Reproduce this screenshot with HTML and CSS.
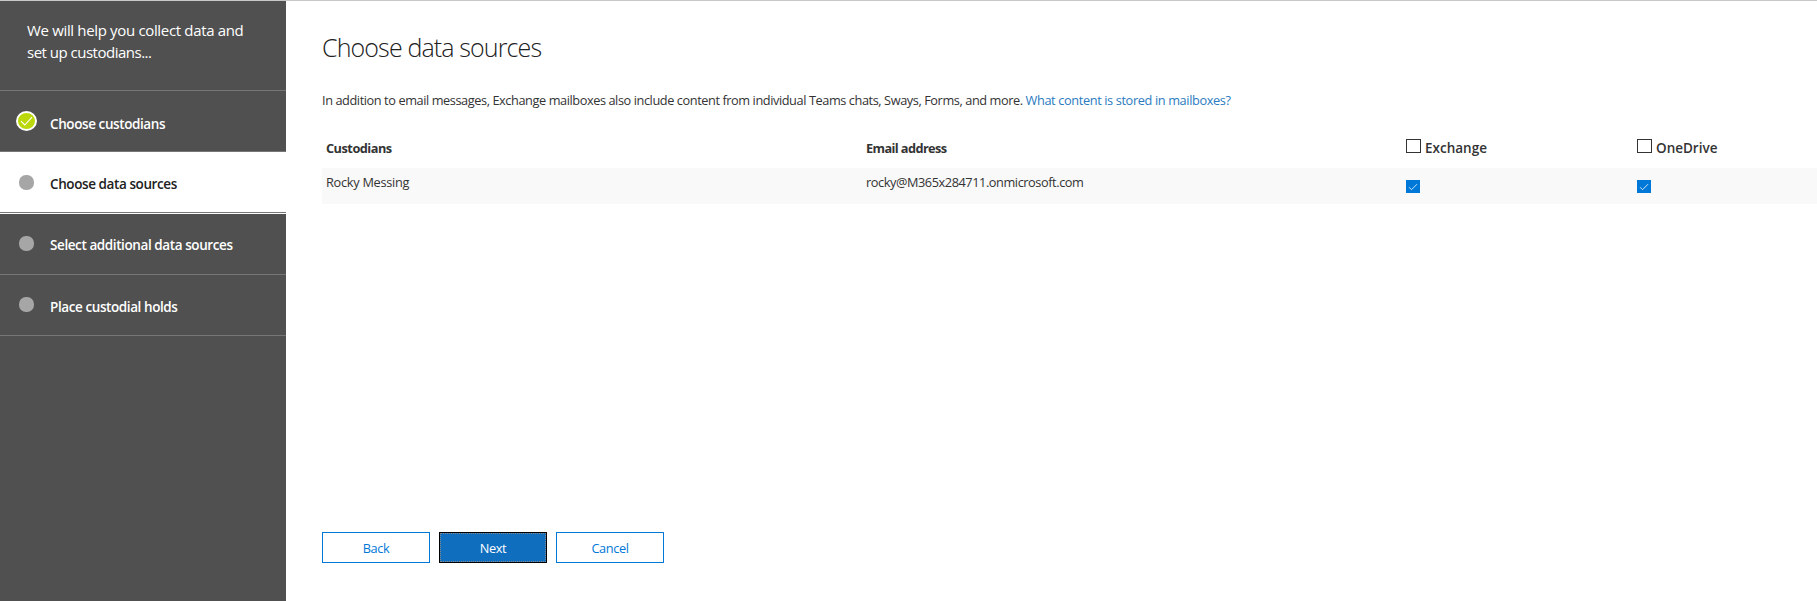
FILE: index.html
```html
<!DOCTYPE html>
<html lang="en">
<head>
<meta charset="utf-8">
<title>Choose data sources</title>
<link rel="stylesheet" href="styles.css">
</head>
<body>
<div class="page">
  <aside class="sidebar">
    <div class="intro">We will help you collect data and<br><span class="intro-end">set up custodians...</span></div>
    <ol class="steps">
      <li class="step done">
        <svg class="done-icon" width="21" height="20" viewBox="0 0 21 20"><ellipse cx="10.5" cy="10" rx="9.5" ry="9" fill="#bad80a" stroke="#fff" stroke-width="2"/><path d="M5 10.2 8.8 14 16 6.2" fill="none" stroke="#fff" stroke-width="1.1"/></svg>
        <span class="label">Choose custodians</span>
      </li>
      <li class="step current"><i class="dot"></i><span class="label">Choose data sources</span></li>
      <li class="step after-current"><i class="dot"></i><span class="label">Select additional data sources</span></li>
      <li class="step last"><i class="dot"></i><span class="label">Place custodial holds</span></li>
    </ol>
  </aside>
  <main class="content">
    <h1>Choose data sources</h1>
    <p class="description">In addition to email messages, Exchange mailboxes also include content from individual Teams chats, Sways, Forms, and more. <a href="#">What content is stored in mailboxes?</a></p>
    <div class="table">
      <div class="row head">
        <div class="cell">Custodians</div>
        <div class="cell email-head">Email address</div>
        <div class="cell check"><i class="box"></i><span>Exchange</span></div>
        <div class="cell check"><i class="box"></i><span>OneDrive</span></div>
      </div>
      <div class="row data">
        <div class="cell name">Rocky Messing</div>
        <div class="cell email">rocky@M365x284711.onmicrosoft.com</div>
        <div class="cell"><svg class="ticked" width="14" height="13" viewBox="0 0 14 13"><path fill="#0078d7" d="M0 0h14v13H0z"/><path d="M3 7.2 5.5 9.7 11 4.2" fill="none" stroke="#fff" stroke-width=".8"/></svg></div>
        <div class="cell"><svg class="ticked" width="14" height="13" viewBox="0 0 14 13"><path fill="#0078d7" d="M0 0h14v13H0z"/><path d="M3 7.2 5.5 9.7 11 4.2" fill="none" stroke="#fff" stroke-width=".8"/></svg></div>
      </div>
    </div>
    <div class="actions">
      <button class="btn">Back</button>
      <button class="btn primary">Next</button>
      <button class="btn">Cancel</button>
    </div>
  </main>
</div>
</body>
</html>
```
FILE: styles.css
```css
* { box-sizing: border-box; }
body { margin: 0; font: 12.75px/18px "Open Sans", "Noto Sans", sans-serif; color: #333; background: #fff; }
.page { display: flex; height: 601px; border-top: 1px solid #c8c8c8; overflow: hidden; }
.sidebar { width: 286px; flex: none; background: #505050; color: #fff; }
.intro { height: 90px; padding: 18px 0 0 27px; font-size: 15px; line-height: 22px; letter-spacing: -.34px; white-space: nowrap; border-bottom: 1px solid #767676; }
.intro-end { letter-spacing: -.5px; }
.steps { list-style: none; margin: 0; padding: 0; }
.step { display: flex; height: 61px; padding-left: 19px; border-bottom: 1px solid #767676; font-weight: 600; font-size: 13.5px; line-height: 20px; letter-spacing: -.41px; }
.done { padding-left: 16px; }
.done-icon { margin-top: 20px; margin-right: 13px; }
.dot { width: 15px; height: 15px; margin: 22px 16px 0 0; border-radius: 7px; background: #a6a6a6; }
.label { margin-top: 22px; white-space: nowrap; }
.done .label { margin-top: 23px; }
.current { background: #fff; color: #212121; }
.current .dot { margin-top: 23px; }
.after-current { height: 62px; border-top: 1px solid #fff; }
.after-current .label { margin-top: 21px; }
.content { flex: 1; min-width: 0; padding-left: 36px; display: flex; flex-direction: column; }
h1 { margin: 26px 0 0; font-size: 25px; line-height: 40px; font-weight: 300; letter-spacing: -.87px; color: #212121; }
.description { margin: 24px 0 0; white-space: nowrap; letter-spacing: -.42px; }
a { color: #2b7bbf; text-decoration: none; letter-spacing: -.37px; }
.table { margin-top: 28px; }
.row { display: grid; grid-template-columns: 540px 540px 231px 1fr; }
.cell { padding-left: 4px; letter-spacing: -.5px; }
.email-head { letter-spacing: -.6px; }
.head { height: 31px; padding-top: 2px; font-weight: 700; }
.check { display: flex; gap: 4px; font-weight: 600; font-size: 13.5px; letter-spacing: 0; }
.box { width: 15px; height: 14px; border: 1px solid #333; }
.data { height: 36px; background: #f9f9f9; padding-top: 5px; }
.name { letter-spacing: -.27px; }
.email { letter-spacing: -.43px; }
.ticked { display: block; margin-top: 7px; }
.actions { margin-top: auto; margin-bottom: 38px; display: flex; gap: 9px; }
.btn { width: 108px; height: 31px; padding: 0; border: 1px solid #0078d7; background: #fff; color: #0078d7; font: inherit; letter-spacing: -.4px; }
.primary { background: #106ebe; color: #fff; border-color: #000; outline: 1px dotted #8a8a8a; outline-offset: -2px; }
```
